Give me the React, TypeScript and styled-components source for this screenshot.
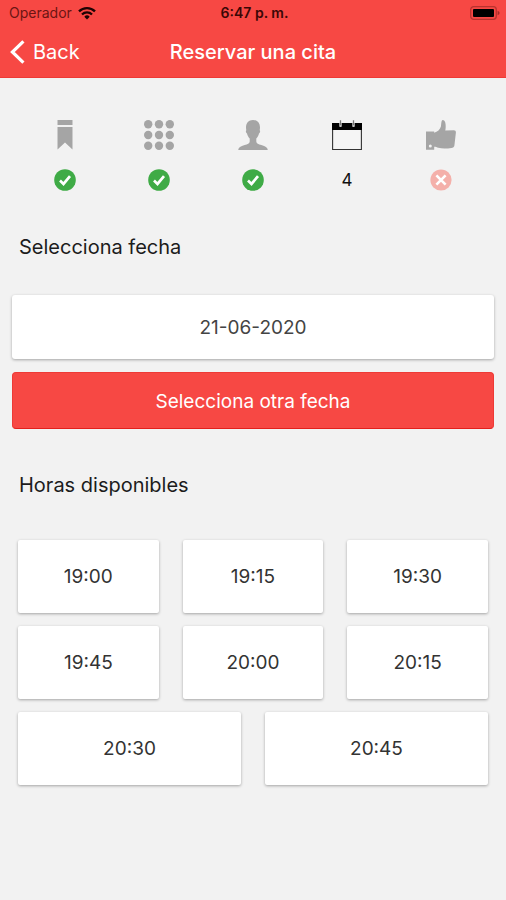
import React from "react";
import styled, { createGlobalStyle } from "styled-components";

const GlobalStyle = createGlobalStyle`
  *, *::before, *::after { box-sizing: border-box; }
  body {
    margin: 0;
    background: #f2f2f2;
    color: #1c1c1c;
    font-family: Inter, "Liberation Sans", sans-serif;
    font-size: 19px;
    line-height: 24px;
  }
  button { font: inherit; cursor: pointer; }
  svg { display: block; }
`;

const Header = styled.header`
  background: #f74844;
  border-bottom: 1px solid #ee3a36;
`;

const TripleRow = styled.div<{ $height: number; $padding: string }>`
  display: grid;
  grid-template-columns: 1fr auto 1fr;
  align-items: center;
  height: ${(p) => p.$height}px;
  padding: ${(p) => p.$padding};
`;

const Carrier = styled.span`
  display: flex;
  align-items: center;
  gap: 6px;
  font-size: 14px;
  line-height: 16px;
  color: #6b1513;
`;

const Clock = styled.time`
  font-size: 14px;
  line-height: 16px;
  font-weight: 600;
  color: #3a0706;
`;

const BatterySlot = styled.span`
  justify-self: end;
`;

const BackButton = styled.button`
  display: flex;
  align-items: center;
  justify-self: start;
  gap: 8px;
  padding: 0;
  border: 0;
  background: none;
  color: #fff;
  && { font-size: 20px; }
`;

const Title = styled.h1`
  margin: 0;
  font-size: 20px;
  line-height: 24px;
  font-weight: 500;
  color: #fff;
`;

const Steps = styled.ol`
  display: grid;
  grid-template-columns: repeat(5, 1fr);
  margin: 0;
  padding: 42px 18px 0;
  list-style: none;
`;

const Step = styled.li`
  display: flex;
  flex-direction: column;
  align-items: center;
  gap: 19px;
`;

const StepState = styled.span`
  display: flex;
  align-items: center;
  justify-content: center;
  height: 22px;
  font-size: 17px;
  line-height: 22px;
  color: #111;
`;

const Heading = styled.h2`
  margin: 0;
  padding: 44px 19px 36px;
  font-size: 20px;
  line-height: 24px;
  font-weight: 400;
`;

const DatePanel = styled.section`
  display: flex;
  flex-direction: column;
  gap: 13px;
  padding: 0 12px;
`;

const DateCard = styled.time`
  display: flex;
  align-items: center;
  justify-content: center;
  height: 64px;
  padding-top: 2px;
  border-radius: 3px;
  background: #fff;
  color: #444;
  box-shadow: 0 1px 3px rgba(0, 0, 0, 0.32);
`;

const PrimaryButton = styled.button`
  height: 57px;
  padding: 2px 16px 0;
  border: 1px solid #ee3a36;
  border-bottom-color: #e3201c;
  border-radius: 4px;
  background: #f74844;
  color: #fff;
`;

const HourGrid = styled.div`
  display: grid;
  grid-template-columns: repeat(6, 1fr);
  gap: 13px 24px;
  padding: 7px 18px 40px;
`;

const HourButton = styled.button<{ $span: number }>`
  grid-column: span ${(p) => p.$span};
  height: 73px;
  padding: 0;
  border: 0;
  border-radius: 2px;
  background: #fff;
  color: #333;
  box-shadow: 0 1px 3px rgba(0, 0, 0, 0.32);
`;

const WifiIcon = () => (
  <svg width="18" height="14" viewBox="0 0 18 14" aria-hidden="true">
    <g fill="none" stroke="#1d0303" strokeWidth="2.3">
      <path d="M1 5.4A11.3 11.3 0 0 1 17 5.4" />
      <path d="M4 8.5A7.1 7.1 0 0 1 14 8.5" />
    </g>
    <path d="M9 13.4 6.3 10.7A3.8 3.8 0 0 1 11.7 10.7Z" fill="#1d0303" />
  </svg>
);

const BatteryIcon = () => (
  <svg width="30" height="14" viewBox="0 0 30 14" role="img" aria-label="Batería">
    <rect x="0.7" y="0.7" width="25.6" height="12.6" rx="3" fill="none" stroke="#b8332f" strokeWidth="1.3" />
    <rect x="3" y="3" width="21" height="8" rx="1" fill="#000" />
    <path d="M27.6 4.8q2 .8 2 2.2t-2 2.2z" fill="#a52c29" />
  </svg>
);

const ChevronIcon = () => (
  <svg width="15" height="24" viewBox="0 0 15 24" aria-hidden="true">
    <path d="M13.4 1.4 2.4 12l11 10.6" fill="none" stroke="#fff" strokeWidth="3.2" />
  </svg>
);

const BookmarkIcon = () => (
  <svg width="30" height="30" viewBox="0 0 30 30" fill="#a5a5a5" aria-hidden="true">
    <path d="M7.5 0h15v5h-15zM7.5 7h15v22.5L15 22.5l-7.5 7z" />
  </svg>
);

const DotsIcon = () => (
  <svg width="30" height="30" viewBox="0 0 30 30" fill="#a5a5a5" aria-hidden="true">
    {[4.2, 15, 25.8].map((y) =>
      [4.2, 15, 25.8].map((x) => <circle key={`${x}-${y}`} cx={x} cy={y} r="4.2" />)
    )}
  </svg>
);

const PersonIcon = () => (
  <svg width="30" height="30" viewBox="0 0 30 30" fill="#a5a5a5" aria-hidden="true">
    <path d="M15 0c4.5 0 7 3 7 7.5 0 1.2-.2 2-.3 2.7.8.5.5 2.6-.7 3.3-.5 2.3-1.4 3.7-2.7 4.9v3.1c0 2.1 2.1 2.8 5.1 3.6 4 1.1 6.1 2.4 6.4 4.9H.2c.3-2.500 2.400-3.800 6.400-4.900 3-.8 5.100-1.500 5.100-3.600v-3.100c-1.300-1.200-2.200-2.600-2.700-4.900-1.200-.7-1.500-2.800-.7-3.300C8.200 9.500 8 8.700 8 7.500 8 3 10.500 0 15 0z" />
  </svg>
);

const CalendarIcon = () => (
  <svg width="30" height="30" viewBox="0 0 30 30" aria-hidden="true">
    <path d="M.6 3.5h28.8v26H.6z" fill="#f5f5f5" stroke="#333" strokeWidth="1.1" />
    <path d="M0 3h30v7H0z" fill="#000" />
    <path d="M8.500 3v3.800M21.500 3v3.800" stroke="#fff" strokeWidth="2.2" />
    <path d="M8.500 .3v5.200M21.500 .3v5.200" stroke="#777" strokeWidth="1.3" />
  </svg>
);

const ThumbIcon = () => (
  <svg width="30" height="30" viewBox="0 0 30 30" aria-hidden="true">
    <path
      fill="#a5a5a5"
      d="M0 11.500h8.200v1.200c3.200-.9 6-3.200 6.700-6.200.3-2 .3-4.200.9-5.700.4-1 1.500-1 2.300-.2 1.800 1.900 1.900 5.800 1.200 10l8.500-.3c1.500 0 2.200.9 2.100 2.100l-1.500 13c-.2 1.500-1.300 2.300-3 2.500-4.500.6-9.300.9-13-.2-1.500-.5-2.700-1-4.200-1v3.100H0z"
    />
    <circle cx="4.3" cy="26" r="1.5" fill="#f2f2f2" />
  </svg>
);

const CheckBadge = () => (
  <svg width="22" height="22" viewBox="0 0 22 22" role="img" aria-label="Completado">
    <circle cx="11" cy="11" r="10.8" fill="#3fab46" />
    <path d="M6 11.500l3.500 3.400L16 7.200" fill="none" stroke="#fff" strokeWidth="2.7" />
  </svg>
);

const CrossBadge = () => (
  <svg width="22" height="22" viewBox="0 0 22 22" role="img" aria-label="Pendiente">
    <circle cx="11" cy="11" r="10.6" fill="#f4b0aa" />
    <path d="M6.400 6.400l9.200 9.200M15.600 6.400l-9.200 9.200" stroke="#fff" strokeWidth="2.6" />
  </svg>
);

const steps = [
  { id: "servicio", icon: <BookmarkIcon />, state: <CheckBadge /> },
  { id: "categoria", icon: <DotsIcon />, state: <CheckBadge /> },
  { id: "persona", icon: <PersonIcon />, state: <CheckBadge /> },
  { id: "fecha", icon: <CalendarIcon />, state: "4" },
  { id: "confirmacion", icon: <ThumbIcon />, state: <CrossBadge /> },
];

const hours = ["19:00", "19:15", "19:30", "19:45", "20:00", "20:15", "20:30", "20:45"];

/* Three hours per row; a last row of two splits the width in halves. */
const spanFor = (index: number, total: number) => {
  const rest = total % 3;
  return rest > 0 && index >= total - rest ? 6 / rest : 2;
};

export default function App() {
  return (
    <>
      <GlobalStyle />
      <Header>
        <TripleRow $height={26} $padding="0 6px 0 9px">
          <Carrier>
            Operador
            <WifiIcon />
          </Carrier>
          <Clock dateTime="18:47">6:47 p. m.</Clock>
          <BatterySlot>
            <BatteryIcon />
          </BatterySlot>
        </TripleRow>
        <TripleRow $height={51} $padding="0 10px">
          <BackButton type="button">
            <ChevronIcon />
            Back
          </BackButton>
          <Title>Reservar una cita</Title>
        </TripleRow>
      </Header>
      <main>
        <Steps>
          {steps.map((step) => (
            <Step key={step.id} aria-current={step.id === "fecha" ? "step" : undefined}>
              {step.icon}
              <StepState>{step.state}</StepState>
            </Step>
          ))}
        </Steps>
        <Heading>Selecciona fecha</Heading>
        <DatePanel>
          <DateCard dateTime="2020-06-21">21-06-2020</DateCard>
          <PrimaryButton type="button">Selecciona otra fecha</PrimaryButton>
        </DatePanel>
        <Heading>Horas disponibles</Heading>
        <HourGrid>
          {hours.map((hour, i) => (
            <HourButton key={hour} type="button" $span={spanFor(i, hours.length)}>
              {hour}
            </HourButton>
          ))}
        </HourGrid>
      </main>
    </>
  );
}
